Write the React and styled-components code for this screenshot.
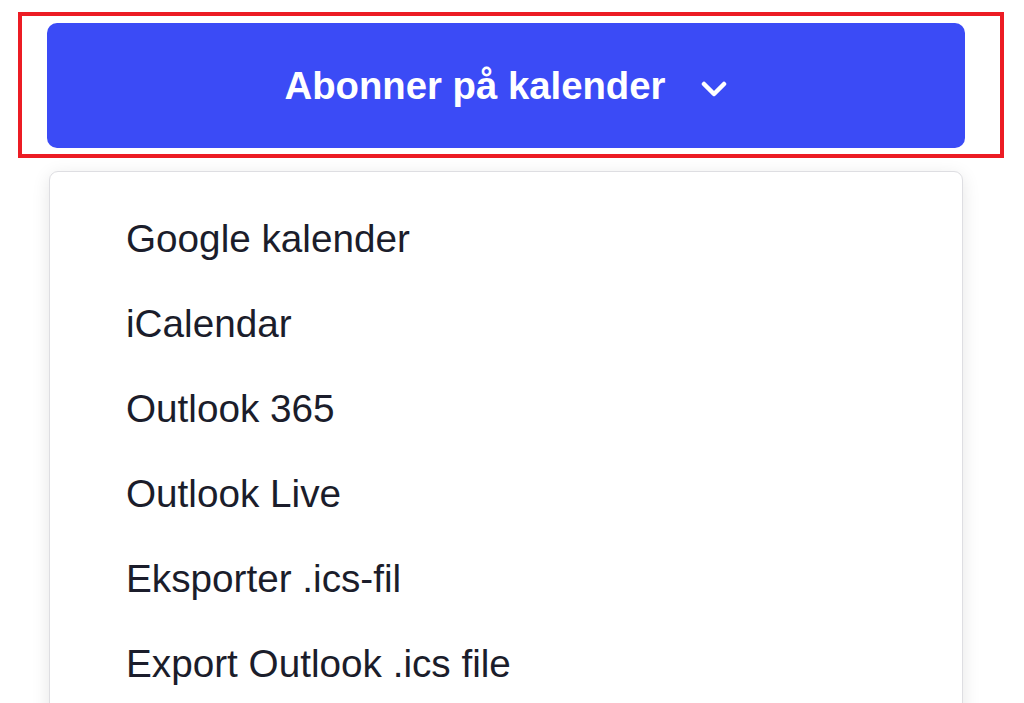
import styled, { createGlobalStyle } from "styled-components";

const GlobalStyle = createGlobalStyle`
  html, body {
    margin: 0;
    padding: 0;
    background: #ffffff;
    font-family: "Liberation Sans", Arial, Helvetica, sans-serif;
  }
`;

const Page = styled.div`
  display: flex;
  flex-direction: column;
  align-items: flex-start;
  padding: 12px 0 0 18px;
  height: 703px;
  box-sizing: border-box;
  overflow: hidden;
`;

const Highlight = styled.div`
  width: 986px;
  box-sizing: border-box;
  border: 4px solid #ec1c24;
  padding: 7px 35px 6px 25px;
`;

const SubscribeButton = styled.button`
  display: flex;
  align-items: center;
  justify-content: center;
  gap: 36px;
  width: 100%;
  height: 125px;
  border: none;
  border-radius: 10px;
  background: #3b4bf6;
  color: #ffffff;
  font-family: inherit;
  font-size: 38.3px;
  font-weight: 700;
  cursor: pointer;
`;

const Chevron = styled.svg`
  width: 26px;
  height: 16px;
  margin-top: 6px;
`;

const Menu = styled.ul`
  list-style: none;
  margin: 13px 0 0 31px;
  padding: 24px 0;
  width: 914px;
  box-sizing: border-box;
  background: #ffffff;
  border: 1px solid #dedee2;
  border-radius: 9px;
  box-shadow: 0 4px 18px rgba(0, 0, 0, 0.1);
`;

const MenuItem = styled.li`
  height: 85px;
  display: flex;
  align-items: center;
  padding-left: 76px;
  color: #1b1d2b;
  font-size: 38.7px;
`;

const items = [
  "Google kalender",
  "iCalendar",
  "Outlook 365",
  "Outlook Live",
  "Eksporter .ics-fil",
  "Export Outlook .ics file",
];

export default function App() {
  return (
    <>
      <GlobalStyle />
      <Page>
        <Highlight>
          <SubscribeButton>
            <span>Abonner på kalender</span>
            <Chevron viewBox="0 0 26 16" fill="none">
              <path
                d="M3 3l10 10 10-10"
                stroke="#ffffff"
                strokeWidth="4.5"
                strokeLinecap="round"
                strokeLinejoin="round"
              />
            </Chevron>
          </SubscribeButton>
        </Highlight>
        <Menu>
          {items.map((label) => (
            <MenuItem key={label}>{label}</MenuItem>
          ))}
        </Menu>
      </Page>
    </>
  );
}
